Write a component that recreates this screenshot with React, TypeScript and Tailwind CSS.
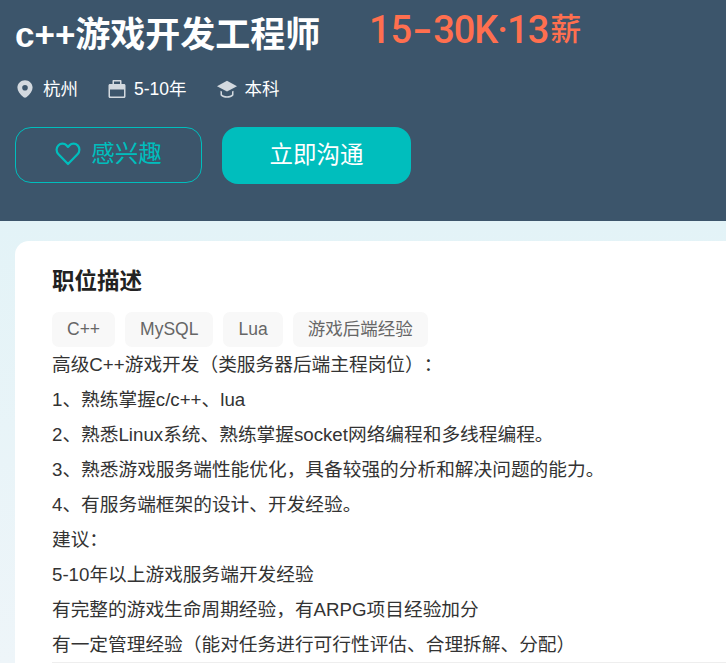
const FONT = "font-['Liberation_Sans','Noto_Sans_CJK_SC',sans-serif]";

const lines = [
    "高级C++游戏开发（类服务器后端主程岗位）：",
    "1、熟练掌握c/c++、lua",
    "2、熟悉Linux系统、熟练掌握socket网络编程和多线程编程。",
    "3、熟悉游戏服务端性能优化，具备较强的分析和解决问题的能力。",
    "4、有服务端框架的设计、开发经验。",
    "建议：",
    "5-10年以上游戏服务端开发经验",
    "有完整的游戏生命周期经验，有ARPG项目经验加分",
    "有一定管理经验（能对任务进行可行性评估、合理拆解、分配）",
];

const tags = ["C++", "MySQL", "Lua", "游戏后端经验"];

function Pin() {
    return (
        <svg width="16" height="18" viewBox="0 0 16 18" className="text-[#d3d9df] ml-[2px]">
            <path fill="currentColor" fillRule="evenodd"
                  d="M8 .2C3.800.2.400 3.500.400 7.600c0 3.100 2.500 6.800 6.200 9.700.8.600 2 .6 2.800 0 3.700-2.900 6.200-6.600 6.200-9.700C15.600 3.500 12.200.2 8 .2zm0 4.800a2.800 2.800 0 1 1 0 5.600A2.800 2.800 0 0 1 8 5z"/>
        </svg>
    );
}

function Case() {
    return (
        <svg width="18" height="18" viewBox="0 0 18 18" className="text-[#d3d9df]">
            <path fill="currentColor" fillRule="evenodd"
                  d="M5.500 0h7c.6 0 1 .4 1 1v3H16c.9 0 1.500.6 1.500 1.500v11c0 .9-.6 1.500-1.500 1.500H2c-.9 0-1.500-.6-1.500-1.500v-11C.5 4.600 1.100 4 2 4h2.500V1c0-.6.4-1 1-1zM6 1.500V4h6V1.500H6zM2 9.500v6.500c0 .3.200.5.500.5h13c.3 0 .5-.2.500-.5V9.500H2z"/>
        </svg>
    );
}

function Cap() {
    return (
        <svg width="20" height="18" viewBox="0 0 20 18" className="text-[#d3d9df]">
            <path fill="currentColor" d="M10 .8 0 6.200l10 5.300 10-5.300L10 .8z"/>
            <path fill="currentColor" d="M3.500 10.800v4.400c1.600 1.800 3.900 2.600 6.500 2.600s4.900-.8 6.500-2.600v-4.400l-1.500.8v3c-1.200 1.200-3 1.700-5 1.700s-3.800-.5-5-1.700v-3l-1.500-.8z"/>
        </svg>
    );
}

function HeartIcon() {
    return (
        <svg width="26" height="24" viewBox="0 0 26 24" fill="none" stroke="currentColor" strokeWidth="2.200" strokeLinejoin="round" className="mt-[-3px]">
            <path d="M13 22 3.500 12.300C1 9.700 1 5.800 3.300 3.400c2.300-2.300 6-2.300 8.300 0L13 4.900l1.400-1.500c2.300-2.300 6-2.300 8.300 0 2.300 2.400 2.300 6.300-.2 8.900L13 22z"/>
        </svg>
    );
}

function Meta({icon, text, gap}: { icon: React.ReactNode; text: string; gap: string }) {
    return (
        <div className={`flex items-center ${gap}`}>
            {icon}
            <span>{text}</span>
        </div>
    );
}

export default function App() {
    return (
        <div className={`w-[726px] h-[663px] overflow-hidden [text-spacing-trim:space-all] ${FONT}`}>
            <header className="h-[221px] bg-[#3c556b] px-[15px]">
                <div className="flex items-start h-[70px]">
                    <h1 className="text-[35px] leading-[70px] font-bold text-white w-[354px] shrink-0">c++游戏开发工程师</h1>
                    <div className="text-[38px] leading-[60px] font-medium text-[#ff6f4f] font-['Roboto','Noto_Sans_CJK_SC',sans-serif] flex items-center">
                        <span>15</span>
                        <span className="inline-block scale-x-[1.500] mx-[4px]">-</span>
                        <span className="tracking-[-1px]">30K·13</span>
                        <span className="text-[31px] ml-[2px]">薪</span>
                    </div>
                </div>
                <div className="flex items-center gap-[30px] h-[38px] text-[17.500px] text-white">
                    <Meta icon={<Pin/>} text="杭州" gap="gap-[10px]"/>
                    <Meta icon={<Case/>} text="5-10年" gap="gap-[8px]"/>
                    <Meta icon={<Cap/>} text="本科" gap="gap-[8px]"/>
                </div>
                <div className="flex gap-[20px] mt-[19px]">
                    <button className="w-[187px] h-[56px] rounded-[16px] border border-[#00bebd] flex items-center justify-center gap-[10px] text-[23.500px] text-[#00bebd]">
                        <HeartIcon/>
                        <span>感兴趣</span>
                    </button>
                    <button className="w-[189px] h-[57px] rounded-[16px] bg-[#00bebd] flex items-center justify-center text-[23.500px] text-white">
                        立即沟通
                    </button>
                </div>
            </header>
            <main className="h-[442px] bg-gradient-to-b from-[#e3f3f7] to-[#eef5f9] pt-[20px] pl-[15px]">
                <section className="h-[440px] bg-white rounded-tl-[14px] pl-[37px] pt-[26px]">
                    <h2 className="text-[22.500px] leading-[30px] font-bold text-[#222]">职位描述</h2>
                    <div className="flex gap-[10px] mt-[15px]">
                        {tags.map(tag => (
                            <span key={tag} className="h-[35px] px-[15px] rounded-[7px] bg-[#f8f8f8] text-[17.500px] leading-[35px] text-[#666]">{tag}</span>
                        ))}
                    </div>
                    <div className="text-[18.700px] leading-[35px] text-[#333]">
                        {lines.map(line => <p key={line}>{line}</p>)}
                    </div>
                    <div className="h-px bg-[#eee]"></div>
                </section>
            </main>
        </div>
    );
}
